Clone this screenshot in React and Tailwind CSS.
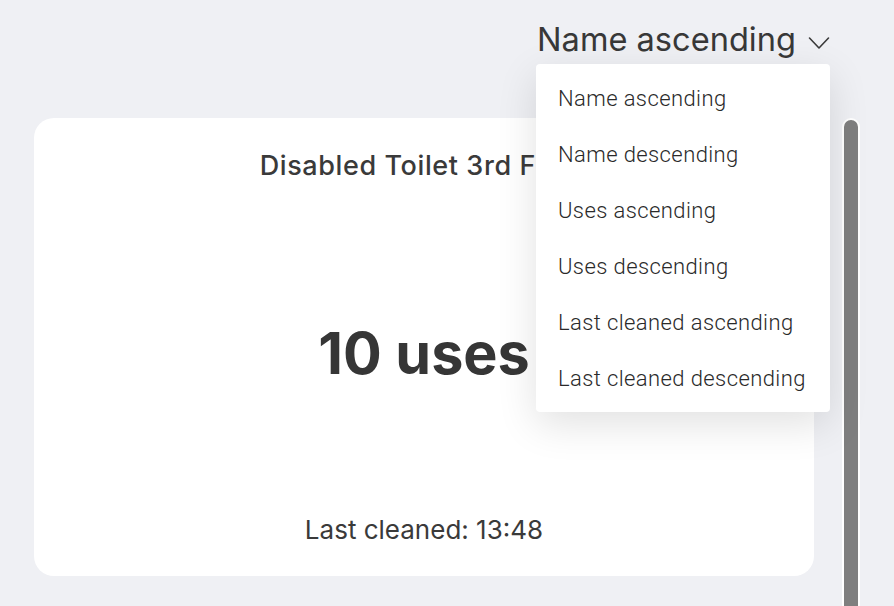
import { useState } from 'react';

const OPTIONS = [
  'Name ascending',
  'Name descending',
  'Uses ascending',
  'Uses descending',
  'Last cleaned ascending',
  'Last cleaned descending',
];

const Chevron = () => (
  <svg width="22" height="14" viewBox="0 0 22 14" fill="none" className="ml-[12px] mt-[8px]">
    <path d="M1.5 2 L11 12 L20.5 2" stroke="#3a3a3a" strokeWidth="1.6" strokeLinecap="round" strokeLinejoin="round" />
  </svg>
);

const App = () => {
  const [sort, setSort] = useState('Name ascending');
  const [open, setOpen] = useState(true);

  return (
    <div className="min-h-screen h-[606px] overflow-hidden bg-[#eff0f4] flex font-['Inter',sans-serif] text-[#353535]">
      <div className="w-[830px] pl-[34px] flex flex-col">
        {/* Sort select */}
        <div className="relative flex justify-end pt-[20px] h-[118px]">
          <button
            onClick={() => setOpen((o) => !o)}
            className="flex items-center h-[38px] text-[32.6px] leading-[38px] text-[#383838]"
          >
            {sort}
            <Chevron />
          </button>
          {open && (
            <div className="absolute right-0 top-[64px] z-10 w-[294px] py-[6px] bg-white rounded-[4px] shadow-[0_12px_40px_rgba(0,0,0,0.12)]">
              {OPTIONS.map((o) => (
                <div
                  key={o}
                  onClick={() => { setSort(o); setOpen(false); }}
                  className="h-[56px] flex items-center px-[22px] font-['Roboto',sans-serif] text-[22px] tracking-[0.4px] font-light text-[#2a2a2a] cursor-pointer"
                >
                  {o}
                </div>
              ))}
            </div>
          )}
        </div>

        {/* Toilet card */}
        <div className="w-[780px] h-[458px] bg-white rounded-[20px] flex flex-col items-center">
          <h2 className="mt-[33px] h-[30px] leading-[30px] text-[27px] tracking-[0.6px] font-medium text-[#3a3a3a]">Disabled Toilet 3rd Floor</h2>
          <div className="flex-1 flex items-center justify-center pt-[10px]">
            <span className="text-[57.5px] font-bold text-[#363636]">10 uses</span>
          </div>
          <p className="mb-[31px] h-[30px] leading-[30px] text-[26px] text-[#3a3a3a]">Last cleaned: 13:48</p>
        </div>
      </div>

      {/* Scrollbar */}
      <div className="ml-[12px] pt-[118px]">
        <div className="w-[18px] h-[520px] bg-[#7f7f7f] border-2 border-white rounded-full" />
      </div>
    </div>
  );
};

export default App;
